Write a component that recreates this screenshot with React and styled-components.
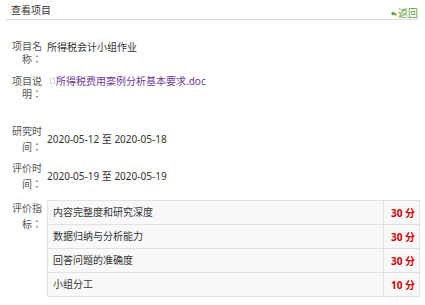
import React from 'react';
import styled, {createGlobalStyle} from 'styled-components';

const GlobalStyle = createGlobalStyle`
    body {
        margin: 0;
        background: #fff;
        font-family: "Noto Sans", "Noto Sans CJK SC", sans-serif;
        font-size: 10px;
        color: #333;
    }
`;

const Page = styled.div`
    width: 425px;
    height: 305px;
    overflow: hidden;
`;

const Header = styled.div`
    display: flex;
    justify-content: space-between;
    align-items: flex-end;
    margin: 0 7px 0 6px;
    height: 19px;
    border-bottom: 1px solid #dcdcdc;
`;

const Title = styled.div`
    padding-left: 5px;
    padding-bottom: 2px;
    font-size: 10px;
    line-height: 13px;
    color: #333;
`;

const Back = styled.a`
    display: flex;
    align-items: center;
    gap: 1px;
    margin-bottom: -1px;
    font-size: 10px;
    line-height: 13px;
    color: #5c9e32;
    text-decoration: none;
`;

const Form = styled.div`
    display: flex;
    flex-direction: column;
    padding-left: 11px;
`;

const Row = styled.div`
    display: flex;
    align-items: ${p => p.$align || 'center'};
    gap: 5px;
    margin-top: ${p => p.$top}px;
`;

// JP glyph set gives the full-width colon a centred form
const Label = styled.div.attrs({lang: 'ja'})`
    flex: 0 0 31px;
    width: 31px;
    text-align: right;
    font-family: "Noto Sans CJK JP", "Noto Sans CJK SC", sans-serif;
    line-height: ${p => p.$lh}px;
    color: #555;
`;

const Value = styled.div`
    line-height: 13px;
    padding-top: ${p => p.$pad || 0}px;
    min-height: ${p => p.$min || 0}px;
    color: #333;
`;

const FileLink = styled.a`
    display: inline-flex;
    align-items: center;
    margin-left: 3px;
    color: #6e3a9c;
    text-decoration: none;
`;

const FileIcon = styled.span`
    display: inline-block;
    width: 3px;
    height: 4px;
    border: 1px solid #d6d6d6;
    margin-right: 1px;
`;

const Criteria = styled.table`
    width: 373px;
    border-collapse: collapse;
    background: #f9f9f9;
`;

const Cell = styled.td`
    height: 23px;
    padding: 0 0 0 5px;
    border: 1px solid #e2e2e2;
    line-height: 13px;
    color: #333;
`;

const Score = styled.td`
    width: 31px;
    padding: 0 4px 0 0;
    border: 1px solid #e2e2e2;
    text-align: right;
    font-weight: bold;
    color: #d40000;
    white-space: nowrap;
`;

const criteria = [
    {name: '内容完整度和研究深度', score: 30},
    {name: '数据归纳与分析能力', score: 30},
    {name: '回答问题的准确度', score: 30},
    {name: '小组分工', score: 10},
];

function BackArrow() {
    return (
        <svg width="6" height="6" viewBox="0 0 6 6">
            <path d="M0 2.5 L2.5 0 L2.5 1.6 C4.5 1.6 5.8 3 5.6 6 C5 4.3 4 3.4 2.5 3.4 L2.5 5 Z" fill="#5c9e32" />
        </svg>
    );
}

export default function App() {
    return (
        <Page>
            <GlobalStyle />
            <Header>
                <Title>查看项目</Title>
                <Back href="#"><BackArrow />返回</Back>
            </Header>
            <Form>
                <Row $top={19} $align="flex-start">
                    <Label $lh={13}>项目名称：</Label>
                    <Value $pad={2}>所得税会计小组作业</Value>
                </Row>
                <Row $top={9} $align="flex-start">
                    <Label $lh={13}>项目说明：</Label>
                    <Value $min={40}>
                        <FileLink href="#"><FileIcon />所得税费用案例分析基本要求.doc</FileLink>
                    </Value>
                </Row>
                <Row $top={9}>
                    <Label $lh={16}>研究时间：</Label>
                    <Value>2020-05-12 至 2020-05-18</Value>
                </Row>
                <Row $top={5}>
                    <Label $lh={16}>评价时间：</Label>
                    <Value>2020-05-19 至 2020-05-19</Value>
                </Row>
                <Row $top={8} $align="flex-start">
                    <Label $lh={16}>评价指标：</Label>
                    <Criteria>
                        <tbody>
                            {criteria.map(c => (
                                <tr key={c.name}>
                                    <Cell>{c.name}</Cell>
                                    <Score>{c.score} 分</Score>
                                </tr>
                            ))}
                        </tbody>
                    </Criteria>
                </Row>
            </Form>
        </Page>
    );
}
